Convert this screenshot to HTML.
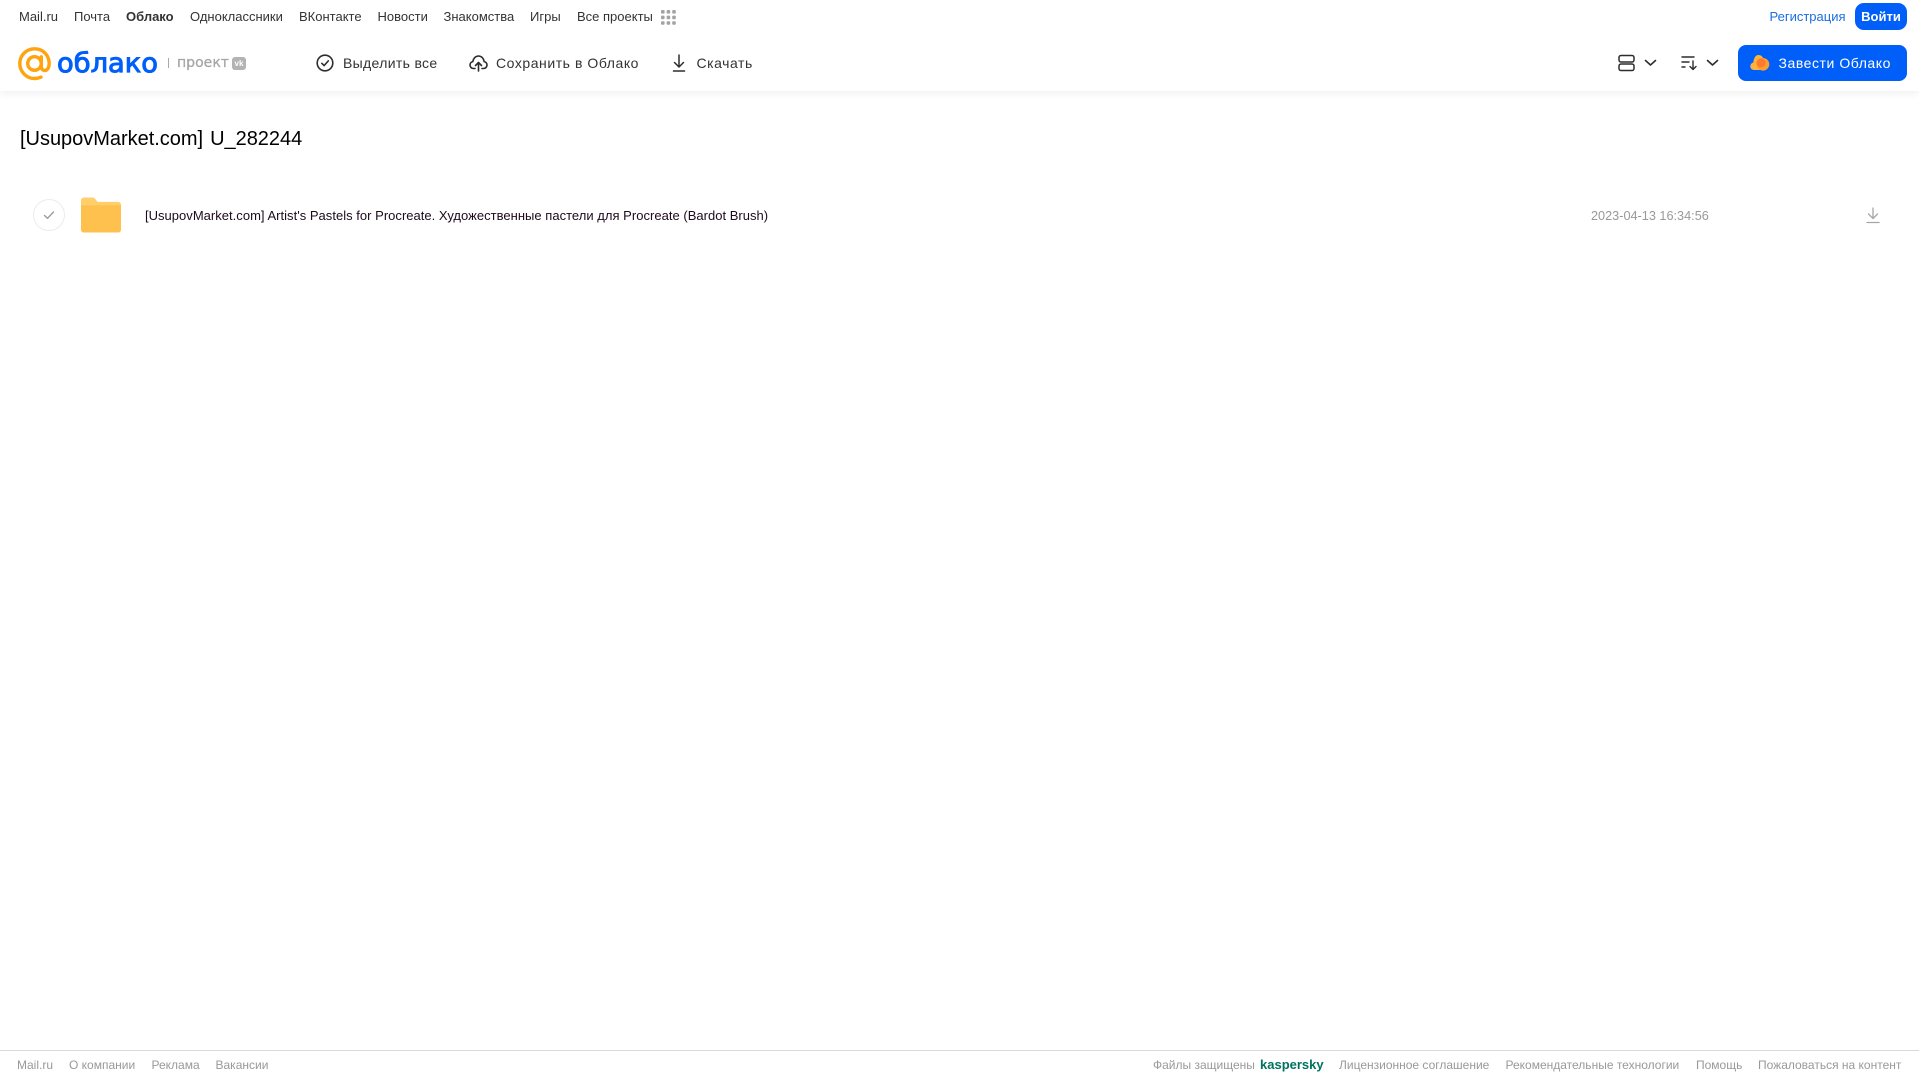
<!DOCTYPE html>
<html lang="ru"><head><meta charset="utf-8"><title>Облако</title>
<style>
html,body{margin:0;padding:0;background:#fff;width:1919px;height:1079px;overflow:hidden}
body{position:relative;font-family:"Liberation Sans",Arial,sans-serif}
.t{position:absolute;white-space:nowrap;line-height:20px}
.n{top:7px;font-size:13px;color:#333}
.a{top:53px;font-size:14px;color:#333;letter-spacing:.55px}
.f{top:1055px;font-size:12px;color:#999}
svg{position:absolute;overflow:visible}
</style></head><body>
<div style="position:absolute;left:0;top:0;width:1919px;height:91px;background:#fff;box-shadow:0 2px 8px rgba(0,0,0,.07)"></div>

<span class="t n" style="left:19px">Mail.ru</span>
<span class="t n" style="left:74px">Почта</span>
<span class="t n" style="left:126px;font-weight:bold">Облако</span>
<span class="t n" style="left:190px">Одноклассники</span>
<span class="t n" style="left:299px">ВКонтакте</span>
<span class="t n" style="left:377.500px">Новости</span>
<span class="t n" style="left:443.500px">Знакомства</span>
<span class="t n" style="left:530px">Игры</span>
<span class="t n" style="left:577px">Все проекты</span>
<svg style="left:661px;top:10px" width="15" height="15" fill="#a3a3a3"><rect x="0" y="0" width="3.6" height="3.6" rx="1"/><rect x="5.6" y="0" width="3.6" height="3.6" rx="1"/><rect x="11.2" y="0" width="3.6" height="3.6" rx="1"/><rect x="0" y="5.6" width="3.6" height="3.6" rx="1"/><rect x="5.6" y="5.6" width="3.6" height="3.6" rx="1"/><rect x="11.2" y="5.6" width="3.6" height="3.6" rx="1"/><rect x="0" y="11.2" width="3.6" height="3.6" rx="1"/><rect x="5.6" y="11.2" width="3.6" height="3.6" rx="1"/><rect x="11.2" y="11.2" width="3.6" height="3.6" rx="1"/></svg>

<span class="t n" style="left:1769.500px;color:#1a6fe0">Регистрация</span>
<div style="position:absolute;left:1855px;top:3px;width:52px;height:27px;border-radius:9px;background:#005ff9"></div>
<span class="t" style="left:1855px;width:52px;text-align:center;top:7px;font-size:13px;color:#fff;font-weight:bold">Войти</span>

<!-- logo -->
<svg style="left:18px;top:47px" width="34" height="34" viewBox="0 0 34 34" fill="none" stroke="#ffa30f" stroke-width="3.4" stroke-linecap="round"><circle cx="16.5" cy="16.5" r="6.8"/><path d="M23.3 9.800v9.600c0 2.800 1.600 4.100 3.600 4.100s4-2 4.300-6.600C31.200 8 25 1.800 16.500 1.800 8.400 1.800 1.800 8.400 1.800 16.500S8.400 31.500 16.500 31.500c2.500 0 4.400-.4 6.500-1.400"/></svg>
<svg style="left:57px;top:44px" width="105" height="36"><text x="0" y="28" font-family="'DejaVu Sans',sans-serif" font-size="27" font-weight="normal" fill="#005ff9" stroke="#005ff9" stroke-width="1" textLength="101" lengthAdjust="spacingAndGlyphs">облако</text></svg>
<div style="position:absolute;left:168px;top:58px;width:1px;height:10px;background:#aaa"></div>
<svg style="left:177px;top:50px" width="54" height="20"><text x="0" y="17" font-family="'DejaVu Sans',sans-serif" font-size="14" fill="#a6a6a6" stroke="#a6a6a6" stroke-width=".3" textLength="52" lengthAdjust="spacingAndGlyphs">проект</text></svg>
<div style="position:absolute;left:232px;top:57px;width:14px;height:13px;border-radius:3px;background:#b3b3b3;color:#fff;font:bold 8px/13px 'Liberation Sans',sans-serif;text-align:center">vk</div>

<!-- actions -->
<svg style="left:316px;top:54px" width="18" height="18" viewBox="0 0 18 18" fill="none" stroke="#2c2d2e" stroke-width="1.600" stroke-linecap="round" stroke-linejoin="round"><circle cx="9" cy="9" r="7.800"/><path d="M5.800 9.300l2.300 2.300 4.200-4.700"/></svg>
<span class="t a" style="left:343px;letter-spacing:.33px">Выделить все</span>
<svg style="left:469px;top:54px" width="19" height="18" viewBox="0 0 19 18" fill="none" stroke="#2c2d2e" stroke-width="1.600" stroke-linecap="round" stroke-linejoin="round"><path d="M6 14.500H4.500C2.500 14.500 1 13 1 11c0-1.700 1.200-3.100 2.800-3.400C4.300 4.400 6.600 2 9.500 2s5.200 2.400 5.700 5.600c1.600.3 2.800 1.700 2.800 3.400 0 2-1.500 3.500-3.500 3.500H13"/><path d="M9.500 17V9M6.500 11.500l3-3 3 3"/></svg>
<span class="t a" style="left:496px">Сохранить в Облако</span>
<svg style="left:671px;top:54px" width="16" height="18" viewBox="0 0 16 18" fill="none" stroke="#2c2d2e" stroke-width="1.500" stroke-linecap="round" stroke-linejoin="round"><path d="M8 1v11.500M3.500 8.500L8 13l4.500-4.500M2.500 17h11"/></svg>
<span class="t a" style="left:696.500px">Скачать</span>

<svg style="left:1618px;top:54px" width="17" height="18" viewBox="0 0 17 18" fill="none" stroke="#2c2d2e" stroke-width="1.500"><rect x="1" y="1.500" width="15" height="6.500" rx="2"/><rect x="1" y="10" width="15" height="6.500" rx="2"/></svg>
<svg style="left:1644px;top:59px" width="13" height="8" viewBox="0 0 13 8" fill="none" stroke="#2c2d2e" stroke-width="1.600" stroke-linecap="round" stroke-linejoin="round"><path d="M1.500 1.500l5 4.500 5-4.500"/></svg>
<svg style="left:1681px;top:55px" width="17" height="16" viewBox="0 0 17 16" fill="none" stroke="#2c2d2e" stroke-width="1.400" stroke-linecap="round" stroke-linejoin="round"><path d="M1 2h12M1 7h7M1 12h3M12 6v8.500M9 11.500l3 3 3-3"/></svg>
<svg style="left:1706px;top:59px" width="13" height="8" viewBox="0 0 13 8" fill="none" stroke="#2c2d2e" stroke-width="1.600" stroke-linecap="round" stroke-linejoin="round"><path d="M1.500 1.500l5 4.500 5-4.500"/></svg>

<div style="position:absolute;left:1738px;top:45px;width:169px;height:36px;border-radius:8px;background:#005ff9"></div>
<svg style="left:1750px;top:54px" width="20" height="17" viewBox="0 0 20 17"><path d="M4 16C1.800 16 .3 14.300.3 12.300c0-1.900 1.300-3.400 3-3.700C3.700 5 5 1 8.500 1c2.500 0 4 1.500 4.700 3.500L16 16z" fill="#ffb23f"/><circle cx="13" cy="10.300" r="6.300" fill="#ff9e2c"/><circle cx="11" cy="9" r="4.500" fill="#ff7a2e"/></svg>
<span class="t" style="left:1778.500px;top:53px;font-size:14px;color:#fff;letter-spacing:.55px">Завести Облако</span>

<!-- content -->
<span class="t" style="left:20px;top:127px;font-size:20px;line-height:24px;color:#000;letter-spacing:-.02px;word-spacing:1.500px">[UsupovMarket.com] U_282244</span>

<div style="position:absolute;left:33px;top:199px;width:30px;height:30px;border:1px solid #ececec;border-radius:50%;background:#fff"></div>
<svg style="left:43px;top:210px" width="12" height="10" viewBox="0 0 12 10" fill="none" stroke="#999" stroke-width="1.400" stroke-linecap="round" stroke-linejoin="round"><path d="M1.500 5.500l3 2.800 6-6.300"/></svg>
<svg style="left:81px;top:197px" width="40" height="36" viewBox="0 0 41 36"><path d="M3 0h8c2 0 3 .7 4 2l2 2.500h21a3 3 0 0 1 3 3V33a3 3 0 0 1-3 3H3a3 3 0 0 1-3-3V3a3 3 0 0 1 3-3z" fill="#ffcf6b"/><path d="M0 8h41v25a3 3 0 0 1-3 3H3a3 3 0 0 1-3-3z" fill="#ffc14d"/></svg>
<span class="t" style="left:145px;top:206px;font-size:13px;color:#1d0a1d;letter-spacing:.02px">[UsupovMarket.com] Artist's Pastels for Procreate. Художественные пастели для Procreate (Bardot Brush)</span>
<span class="t" style="left:1591px;top:206px;font-size:12.700px;color:#999">2023-04-13 16:34:56</span>
<svg style="left:1866px;top:207px" width="14" height="17" viewBox="0 0 14 17" fill="none" stroke="#a6a6a6" stroke-width="1.300" stroke-linecap="round" stroke-linejoin="round"><path d="M7 1v10.500M2.500 7L7 11.500 11.500 7M1 15.500h12"/></svg>

<!-- footer -->
<div style="position:absolute;left:0;top:1050px;width:1919px;height:1px;background:#d9d9d9"></div>
<span class="t f" style="left:17px">Mail.ru</span>
<span class="t f" style="left:69px">О компании</span>
<span class="t f" style="left:151.500px">Реклама</span>
<span class="t f" style="left:215.500px">Вакансии</span>
<span class="t f" style="left:1153px">Файлы защищены</span>
<span class="t" style="left:1260px;top:1055px;font-size:13px;font-weight:bold;color:#00735f">kaspersky</span>
<span class="t f" style="left:1339px">Лицензионное соглашение</span>
<span class="t f" style="left:1505.500px">Рекомендательные технологии</span>
<span class="t f" style="left:1696px">Помощь</span>
<span class="t f" style="left:1758px">Пожаловаться на контент</span>
</body></html>
